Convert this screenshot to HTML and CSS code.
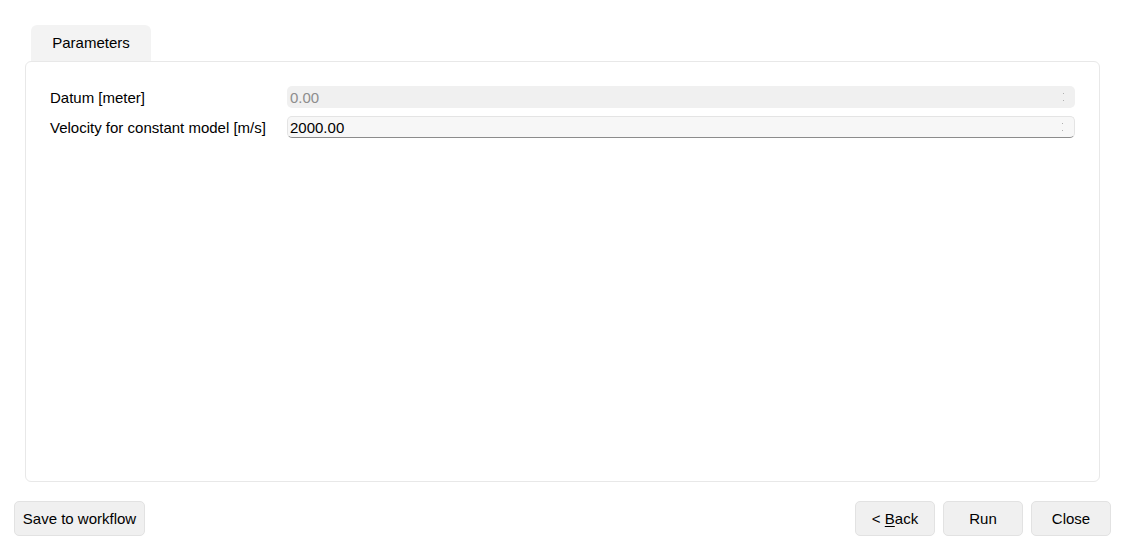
FILE: index.html
```html
<!DOCTYPE html>
<html>
<head>
<meta charset="utf-8">
<link rel="stylesheet" href="styles.css">
</head>
<body>
<div class="dialog">
  <div class="tabs">
    <div class="tab">Parameters</div>
  </div>
  <div class="panel">
    <div class="row">
      <label class="label">Datum [meter]</label>
      <div class="field disabled">
        <span class="value">0.00</span>
        <span class="spin"><i></i><i></i></span>
      </div>
    </div>
    <div class="row">
      <label class="label">Velocity for constant model [m/s]</label>
      <div class="field active">
        <span class="value">2000.00</span>
        <span class="spin"><i></i><i></i></span>
      </div>
    </div>
  </div>
  <div class="buttons">
    <button class="btn wide">Save to workflow</button>
    <div class="spacer"></div>
    <button class="btn">&lt; <u>B</u>ack</button>
    <button class="btn">Run</button>
    <button class="btn">Close</button>
  </div>
</div>
</body>
</html>
```

FILE: styles.css
```css
html, body {
  margin: 0;
  padding: 0;
  background: #ffffff;
  font-family: "Liberation Sans", Arial, sans-serif;
  font-size: 15px;
  color: #000;
}
.dialog {
  width: 1125px;
  height: 550px;
  display: flex;
  flex-direction: column;
}
.tabs {
  display: flex;
  padding: 25px 0 0 31px;
}
.tab {
  width: 120px;
  height: 36px;
  background: #f3f3f3;
  border-radius: 6px 6px 0 0;
  display: flex;
  align-items: center;
  justify-content: center;
  box-sizing: border-box;
  padding-bottom: 2px;
}
.panel {
  margin-left: 25px;
  width: 1075px;
  height: 421px;
  box-sizing: border-box;
  border: 1px solid #e8e8e8;
  border-radius: 6px;
  padding: 24px 24px 0 24px;
  display: flex;
  flex-direction: column;
  gap: 8px;
}
.row {
  display: flex;
  align-items: center;
  height: 22px;
}
.label {
  width: 237px;
  flex: none;
}
.field {
  flex: 1;
  height: 22px;
  box-sizing: border-box;
  border-radius: 5px;
  display: flex;
  align-items: center;
  padding-left: 3px;
  position: relative;
}
.field.disabled {
  background: #f0f0f0;
  color: #8d8d8d;
}
.field.active {
  background: #f7f7f7;
  border: 1px solid #e4e4e4;
  border-bottom: 1px solid #8c8c8c;
  padding-left: 2px;
}
.value {
  flex: 1;
}
.spin {
  width: 24px;
  display: flex;
  flex-direction: column;
  align-items: center;
  gap: 6px;
}
.spin i {
  display: block;
  width: 1px;
  height: 1px;
  background: #b0b0b0;
}
.buttons {
  display: flex;
  padding: 19px 14px 0 14px;
  gap: 8px;
}
.spacer {
  flex: 1;
}
.btn {
  font-family: "Liberation Sans", Arial, sans-serif;
  font-size: 15px;
  color: #000;
  height: 35px;
  width: 80px;
  background: #f0f0f0;
  border: 1px solid #e2e2e2;
  border-radius: 5px;
  padding: 0;
  margin: 0;
}
.btn.wide {
  width: 131px;
}
.btn u {
  text-decoration: underline;
  text-underline-offset: 2px;
}
```
